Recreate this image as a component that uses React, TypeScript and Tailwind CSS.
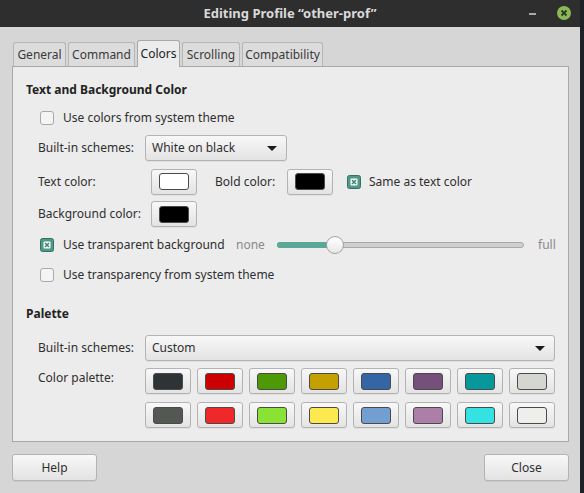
import React from "react";

const paletteTop = ["#2e3436", "#cc0000", "#4e9a06", "#c4a000", "#3465a4", "#75507b", "#06989a", "#d3d7cf"];
const paletteBottom = ["#555753", "#ef2929", "#8ae234", "#fce94f", "#729fcf", "#ad7fa8", "#34e2e2", "#eeeeec"];

const tabs = [
  { label: "General", w: "w-[53px]" },
  { label: "Command", w: "w-[67px]" },
  { label: "Colors", w: "w-[43px]", active: true },
  { label: "Scrolling", w: "w-[58px]" },
  { label: "Compatibility", w: "w-[81px]" },
];

const btn =
  "rounded-[3px] border border-[#b3b3b3] bg-linear-to-b from-[#f8f8f8] to-[#e3e3e3] shadow-[0_1px_0_rgba(0,0,0,0.05)]";

function CheckBox({ checked }: { checked?: boolean }) {
  if (checked) {
    return (
      <svg width="14" height="14" viewBox="0 0 14 14" className="shrink-0">
        <rect x="0.5" y="0.5" width="13" height="13" rx="2" fill="#4f9a86" stroke="#37705f" />
        <rect x="3.5" y="3.5" width="7" height="7" rx="1" fill="#ffffff" />
        <path d="M5 5 L9 9 M9 5 L5 9" stroke="#3f8674" strokeWidth="1.6" />
      </svg>
    );
  }
  return <span className="h-[14px] w-[14px] shrink-0 rounded-[3px] border border-[#a9a9a9] bg-[#f4f4f4]" />;
}

function ColorButton({ color, w = "w-[46px]" }: { color: string; w?: string }) {
  return (
    <div className={`${btn} flex h-[26px] ${w} items-center justify-center`}>
      <span
        className="h-[17px] w-[30px] rounded-[3px] border border-[#4a4a4a]"
        style={{ backgroundColor: color }}
      />
    </div>
  );
}

function Combo({ text, w }: { text: string; w: string }) {
  return (
    <div className={`${btn} flex h-[26px] ${w} items-center justify-between pl-[6px] pr-[9px]`}>
      <span>{text}</span>
      <span className="h-0 w-0 border-x-[5px] border-t-[5px] border-x-transparent border-t-[#1a1a1a]" />
    </div>
  );
}

export default function App() {
  return (
    <div className="flex h-[493px] w-[584px] bg-[#1e2226] font-['Noto_Sans',sans-serif] text-[12px] text-[#2f2f2f]">
      <div className="flex w-[580px] flex-col bg-[#d6d6d6]">
        <div className="relative flex h-[27px] items-center justify-center bg-[#2e2e2e]">
          <span className="text-[13px] font-bold text-[#dadada]">Editing Profile “other-prof”</span>
          <span className="absolute left-[529px] top-[13px] h-[2px] w-[7px] bg-[#a8a8a8]" />
          <span className="absolute left-[557px] top-[6px] flex h-[14px] w-[14px] items-center justify-center rounded-full bg-[#8cb85a]">
            <svg width="8" height="8" viewBox="0 0 8 8">
              <path d="M1.5 1.5 L6.5 6.5 M6.5 1.5 L1.5 6.5" stroke="#2a3a1c" strokeWidth="1.8" />
            </svg>
          </span>
        </div>

        <div className="flex h-[13px]" />
        <div className="flex items-end gap-[2px] pl-[13px]">
          {tabs.map((t) =>
            t.active ? (
              <div
                key={t.label}
                className={`relative z-10 -mb-px flex h-[27px] ${t.w} items-center justify-center rounded-t-[3px] border border-b-0 border-[#a8a8a8] bg-[#ececec] text-[#222]`}
              >
                {t.label}
              </div>
            ) : (
              <div
                key={t.label}
                className={`flex h-[24px] ${t.w} items-center justify-center rounded-t-[3px] border border-b-0 border-[#b6b6b6] bg-[#dcdcdc] text-[#3a3a3a]`}
              >
                {t.label}
              </div>
            )
          )}
        </div>

        <div className="ml-[12px] flex h-[376px] w-[557px] flex-col border border-[#a8a8a8] bg-[#ececec] pl-[13px] pt-[14px]">
          <div className="flex h-[18px] items-center font-bold text-[#222]">Text and Background Color</div>

          <div className="mt-[9px] flex h-[20px] items-center gap-[9px] pl-[14px]">
            <CheckBox />
            <span>Use colors from system theme</span>
          </div>

          <div className="mt-[7px] flex h-[26px] items-center pl-[12px]">
            <span className="w-[107px]">Built-in schemes:</span>
            <Combo text="White on black" w="w-[142px]" />
          </div>

          <div className="mt-[7px] flex h-[27px] items-center pl-[12px]">
            <span className="w-[113px]">Text color:</span>
            <ColorButton color="#ffffff" />
            <span className="ml-[18px] w-[72px]">Bold color:</span>
            <ColorButton color="#000000" />
            <span className="ml-[14px]">
              <CheckBox checked />
            </span>
            <span className="ml-[8px]">Same as text color</span>
          </div>

          <div className="mt-[6px] flex h-[26px] items-center pl-[12px]">
            <span className="w-[113px]">Background color:</span>
            <ColorButton color="#000000" />
          </div>

          <div className="mt-[8px] flex h-[20px] items-center whitespace-nowrap pl-[14px]">
            <CheckBox checked />
            <span className="ml-[9px] w-[173px]">Use transparent background</span>
            <span className="w-[41px] text-[#8a8a8a]">none</span>
            <div className="relative h-[20px] w-[247px]">
              <div className="absolute left-0 right-0 top-[7px] h-[6px] rounded-full border border-[#a9a9a9] bg-[#cfcfcf]" />
              <div className="absolute left-0 top-[7px] h-[6px] w-[58px] rounded-l-full bg-[#5aa896]" />
              <div className="absolute left-[49px] top-[1px] h-[18px] w-[18px] rounded-full border border-[#a3a3a3] bg-linear-to-b from-[#ffffff] to-[#e8e8e8]" />
            </div>
            <span className="ml-[14px] text-[#8a8a8a]">full</span>
          </div>

          <div className="mt-[10px] flex h-[20px] items-center gap-[9px] pl-[14px]">
            <CheckBox />
            <span>Use transparency from system theme</span>
          </div>

          <div className="mt-[20px] flex h-[18px] items-center font-bold text-[#222]">Palette</div>

          <div className="mt-[12px] flex h-[26px] items-center pl-[12px]">
            <span className="w-[107px]">Built-in schemes:</span>
            <Combo text="Custom" w="w-[410px]" />
          </div>

          <div className="mt-[7px] flex pl-[12px]">
            <span className="w-[107px] pt-[1px]">Color palette:</span>
            <div className="flex flex-col gap-[8px]">
              <div className="flex gap-[6px]">
                {paletteTop.map((c) => (
                  <ColorButton key={c} color={c} />
                ))}
              </div>
              <div className="flex gap-[6px]">
                {paletteBottom.map((c) => (
                  <ColorButton key={c} color={c} />
                ))}
              </div>
            </div>
          </div>
        </div>

        <div className="mt-[12px] flex justify-between pl-[12px] pr-[11px]">
          <div className={`${btn} flex h-[27px] w-[85px] items-center justify-center`}>Help</div>
          <div className={`${btn} flex h-[27px] w-[85px] items-center justify-center`}>Close</div>
        </div>
      </div>
    </div>
  );
}
